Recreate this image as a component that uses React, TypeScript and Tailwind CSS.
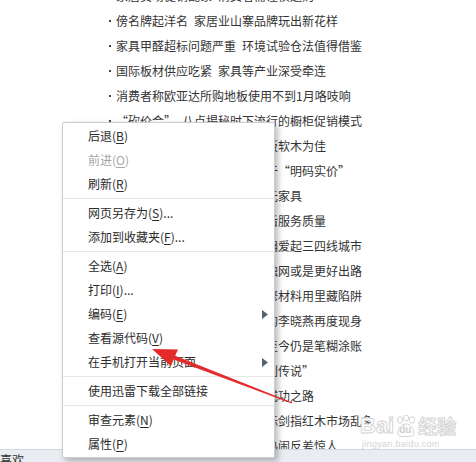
import React from "react";

const lines: string[] = [
  "家居卖场促销乱象 消费者需谨慎选购",
  "傍名牌起洋名 家居业山寨品牌玩出新花样",
  "家具甲醛超标问题严重 环境试验仓法值得借鉴",
  "国际板材供应吃紧 家具等产业深受牵连",
  "消费者称欧亚达所购地板使用不到1月咯吱响",
  "“砍价会” 八点揭秘时下流行的橱柜促销模式",
  "地板种类繁多 选购卧室的地板软木为佳",
  "家具行业价格混乱 亟需回归于“明码实价”",
  "家具市场新宠 年轻人热捧千元家具",
  "家居企业竞争升级 拼的是售后服务质量",
  "一线市场趋于饱和 家居品牌偏爱起三四线城市",
  "传统家居卖场客流遭遇寒冬 触网或是更好出路",
  "家装报价单里暗藏玄机多 装修材料用里藏陷阱",
  "万元床垫事件主角 消失多年的李晓燕再度现身",
  "家具板材甲醛检测标准不一 至今仍是笔糊涂账",
  "红木价格虚高 揭秘家具“暴利传说”",
  "国产家具品牌 探索国际化的成功之路",
  "红木家具新国标即将实施 新标剑指红木市场乱象",
  "家居卖场节假日促销 冷清与热闹反差惊人",
];

type Item =
  | { sep: true }
  | {
      sep?: false;
      label: string;
      k?: string;
      suffix?: string;
      disabled?: boolean;
      sub?: boolean;
    };

const items: Item[] = [
  { label: "后退", k: "B" },
  { label: "前进", k: "O", disabled: true },
  { label: "刷新", k: "R" },
  { sep: true },
  { label: "网页另存为", k: "S", suffix: "..." },
  { label: "添加到收藏夹", k: "F", suffix: "..." },
  { sep: true },
  { label: "全选", k: "A" },
  { label: "打印", k: "I", suffix: "..." },
  { label: "编码", k: "E", sub: true },
  { label: "查看源代码", k: "V" },
  { label: "在手机打开当前页面", sub: true },
  { sep: true },
  { label: "使用迅雷下载全部链接" },
  { sep: true },
  { label: "审查元素", k: "N" },
  { label: "属性", k: "P" },
];

const font = "font-['Noto_Sans_CJK_SC',_'Noto_Sans',_sans-serif]";

export default function App() {
  return (
    <div
      lang="zh-CN"
      className={`relative w-[476px] h-[462px] overflow-hidden bg-white ${font}`}
    >
      {/* background article list */}
      <div className="flex flex-col -mt-[17px]">
        {lines.map((t, i) => (
          <div
            key={i}
            className="h-[25px] flex items-center pl-[109px] text-[12px] leading-[25px] text-[#333] whitespace-nowrap"
          >
            <span className="w-[2px] h-[2px] bg-[#444] mr-[5px] shrink-0" />
            <span>{t.replace(" ", "\u2002")}</span>
          </div>
        ))}
      </div>

      {/* baidu watermark */}
      <div className="absolute left-[360px] top-[413px] flex flex-col items-start pointer-events-none">
        <div className="flex items-end h-[24px]">
          <span className="font-['Liberation_Sans',_sans-serif] font-bold text-[22px] leading-[22px] text-white [-webkit-text-stroke:1px_#d4d4d4]">
            Bai
          </span>
          <span className="relative w-[22px] h-[22px] mx-[1px]">
            <svg width="22" height="22" viewBox="0 0 22 22" className="absolute inset-0">
              <ellipse cx="5" cy="5" rx="2.6" ry="3.2" fill="white" stroke="#d4d4d4" />
              <ellipse cx="11" cy="3" rx="2.6" ry="3" fill="white" stroke="#d4d4d4" />
              <ellipse cx="17" cy="5" rx="2.6" ry="3.2" fill="white" stroke="#d4d4d4" />
              <path d="M3 19 C3 12 7 9 11 9 C15 9 19 12 19 19 C19 21 17 21.5 11 21.5 C5 21.5 3 21 3 19 Z" fill="white" stroke="#d4d4d4" />
            </svg>
            <span className="absolute left-[4px] top-[9px] font-['Liberation_Sans',_sans-serif] font-bold text-[10px] leading-[11px] text-[#cfcfcf]">
              du
            </span>
          </span>
          <span className="text-[19px] leading-[22px] font-bold text-white [-webkit-text-stroke:1px_#d4d4d4]">
            经验
          </span>
        </div>
        <span className="font-['Liberation_Sans',_sans-serif] text-[9px] leading-[10px] text-[#d4d4d4] mt-[2px] pl-[2px] tracking-[0.3px]">
          jingyan.baidu.com
        </span>
      </div>

      {/* bottom status bar */}
      <div className="absolute left-0 right-0 top-[449px] h-[13px] bg-[#e9edf2] border-t border-[#d3d9e0]">
        <span className="absolute left-0 top-[3px] text-[12px] leading-[14px] text-[#333]">喜欢</span>
      </div>

      {/* context menu */}
      <div className="absolute left-[62px] top-[122px] w-[213px] bg-white border border-[#cdcdcd] rounded-[2px] shadow-[3px_3px_6px_rgba(0,0,0,0.28)] pt-[1px] pb-[1px] flex flex-col">
        {items.map((it, i) =>
          it.sep ? (
            <div key={i} className="h-px bg-[#e6e6e6] my-[2px]" />
          ) : (
            <div
              key={i}
              className={`h-[24px] flex items-center justify-between pl-[25px] pr-[6px] text-[12px] leading-[24px] whitespace-nowrap ${
                it.disabled ? "text-[#a6a6a6]" : "text-[#2b2b2b]"
              }`}
            >
              <span>
                {it.label}
                {it.k && (
                  <>
                    (<span className="underline underline-offset-[2px]">{it.k}</span>)
                  </>
                )}
                {it.suffix}
              </span>
              {it.sub && (
                <svg width="6" height="9" viewBox="0 0 6 9">
                  <path d="M0 0 L6 4.5 L0 9 Z" fill="#56616d" />
                </svg>
              )}
            </div>
          )
        )}
      </div>

      {/* red annotation arrow */}
      <svg
        className="absolute inset-0 pointer-events-none"
        width="476"
        height="462"
        viewBox="0 0 476 462"
      >
        <polygon
          points="152,349 178,349.5 175.2,355.8 292.3,402.4 291.8,403.6 173.6,359.4 171,366"
          fill="#e42a2a"
        />
      </svg>
    </div>
  );
}
